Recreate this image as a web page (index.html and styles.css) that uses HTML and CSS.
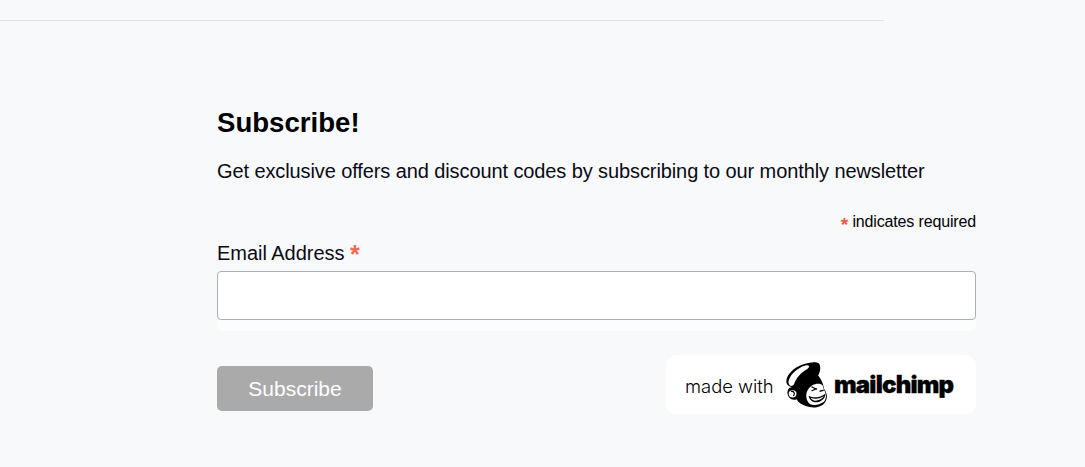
FILE: index.html
```html
<!DOCTYPE html>
<html lang="en">
<head>
<meta charset="utf-8">
<title>Subscribe</title>
<link rel="stylesheet" href="styles.css">
</head>
<body>
<hr class="rule">
<form class="signup">
  <h2 class="title">Subscribe!</h2>
  <p class="lede">Get exclusive offers and discount codes by subscribing to our monthly newsletter</p>
  <div class="required-note"><span class="star">*</span> indicates required</div>
  <label class="label" for="email">Email Address <span class="star star-lg">*</span></label>
  <input class="input" id="email" type="email">
  <div class="input-foot"></div>
  <div class="actions">
    <button class="button" type="button">Subscribe</button>
    <a class="badge">
      <span class="made">made with</span>
      <svg class="chimp" viewBox="27 17 102 120" width="42" height="46" preserveAspectRatio="none" aria-hidden="true">
        <path d="M28 66 C30 42 60 20 90 18 C98 17 106 18 108 22 C112 30 110 45 105 52 C115 65 118 78 120 88 C128 100 128 112 122 122 C112 138 90 138 75 132 C65 128 56 122 53 114 C40 120 28 106 31 93 C32 87 36 83 41 83 C33 80 27 76 28 66 Z" fill="#000"/>
        <path d="M33 70 C34 52 54 32 74 26 C84 24 86 30 78 36 C64 44 52 58 47 74 C44 82 34 82 33 70 Z" fill="#fff"/>
        <circle cx="43" cy="100" r="9.500" fill="#fff"/>
        <path d="M39 94 C46 92 50 99 45 106" fill="none" stroke="#000" stroke-width="3"/>
        <path d="M80 90 C88 74 108 70 116 78 C118 86 120 91 122 95 C126 104 124 114 119 121 C110 129 94 131 86 127 C76 120 73 102 80 90 Z" fill="#fff"/>
        <path d="M82 105 C96 113 110 109 123 99 C123 112 112 122 100 122 C90 122 84 115 82 105 Z" fill="#000"/>
        <path d="M87 110 C98 115 110 113 119 106 C114 115 106 118 99 118 C93 118 89 114 87 110 Z" fill="#fff"/>
        <path d="M90 82 L101 88 M90 92 L101 87" fill="none" stroke="#000" stroke-width="3" stroke-linecap="round"/>
        <path d="M110 93 L117 91" fill="none" stroke="#000" stroke-width="4" stroke-linecap="round"/>
      </svg>
      <span class="wordmark">mailchimp</span>
    </a>
  </div>
</form>
</body>
</html>
```
FILE: styles.css
```css
* { box-sizing: border-box; }
html, body { margin: 0; padding: 0; }
body {
  height: 467px;
  overflow: hidden;
  background: #f8f9fb;
  color: #000;
  font-family: "Liberation Sans", Arial, sans-serif;
}
.rule {
  width: 884px;
  height: 1px;
  margin: 20px 0 0;
  border: 0;
  background: #e2e3e8;
}
.signup {
  width: 759px;
  margin: 0 0 0 217px;
  padding-top: 86px;
}
.title {
  margin: 0;
  font-size: 27.6px;
  line-height: 32px;
  font-weight: 700;
}
.lede {
  margin: 19px 0 0;
  font-size: 20px;
  line-height: 26px;
  letter-spacing: -0.1px;
  color: #0a0a14;
}
.required-note {
  margin-top: 26px;
  text-align: right;
  font-size: 16px;
  line-height: 24px;
  letter-spacing: -0.15px;
}
.star {
  font-size: 19px;
  font-weight: 700;
  line-height: 0;
  vertical-align: -4px;
  color: #e85c41;
}
.star-lg { font-size: 25px; vertical-align: -3px; color: #ec6a50; }
.label {
  display: block;
  margin-top: 7px;
  font-size: 20px;
  line-height: 24px;
  letter-spacing: -0.03px;
  color: #0a0a14;
}
.input {
  display: block;
  width: 100%;
  height: 49px;
  margin-top: 6px;
  background: #fff;
  border: 1px solid #abb0b2;
  border-radius: 4px;
}
.input-foot {
  height: 11px;
  background: #fdfdfe;
  border-radius: 0 0 6px 6px;
}
.actions {
  display: flex;
  justify-content: space-between;
  align-items: flex-start;
  margin-top: 24px;
}
.button {
  width: 156px;
  height: 45px;
  margin-top: 11px;
  border: 0;
  border-radius: 5px;
  background: #aaa;
  color: #fff;
  font-family: inherit;
  font-size: 21px;
  padding: 0;
}
.badge {
  display: flex;
  align-items: center;
  width: 310px;
  height: 59px;
  padding-left: 19px;
  background: #fff;
  border-radius: 10px;
}
.made {
  width: 101px;
  margin-top: 3px;
  font-family: Inter, sans-serif;
  font-weight: 300;
  font-size: 18.4px;
  color: #000;
}
.chimp { display: block; flex: none; }
.wordmark {
  margin-left: 6px;
  font-family: Inter, sans-serif;
  font-weight: 900;
  font-size: 24px;
  letter-spacing: -0.8px;
  color: #000;
  -webkit-text-stroke: 0.3px #000;
}
```
